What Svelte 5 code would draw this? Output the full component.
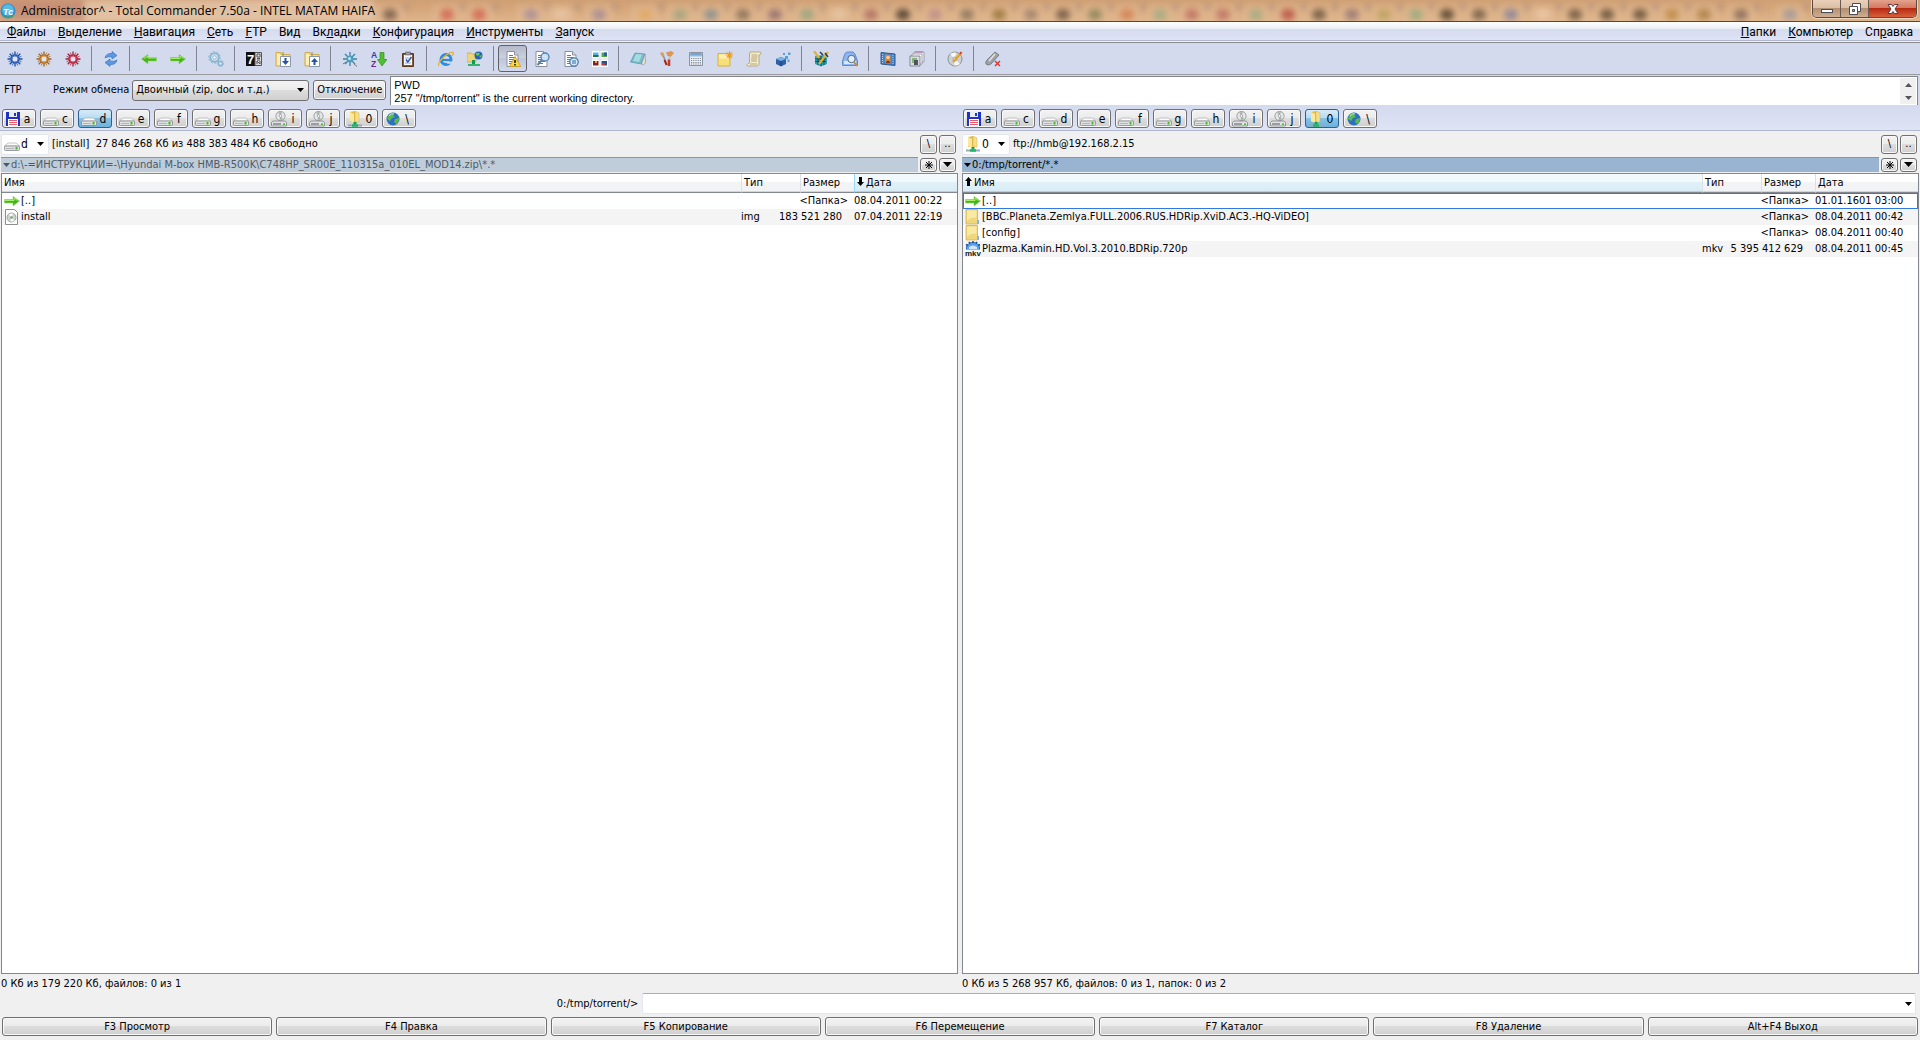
<script>
  const gear = (color, light) => `
    <path d="M8 .5v15M.5 8h15M2.700 2.700l10.600 10.600M13.300 2.700L2.700 13.300" stroke="${color}" stroke-width="1.300"/>
    <path d="M5.300 1.600l5.400 12.800M10.700 1.600L5.300 14.400M1.600 5.300l12.800 5.400M1.600 10.700l12.800-5.400" stroke="${color}" stroke-width=".8"/>
    <circle cx="8" cy="8" r="3.600" fill="#dfe5f6" stroke="${color}" stroke-width="1.800"/><circle cx="8" cy="8" r="3.200" fill="none" stroke="${light}" stroke-width="1"/>`;
  const page = `<path d="M2 .5h7.500l3.500 3.500v11.500H2z" fill="#fff" stroke="#8b8f99"/><path d="M9.500 .5v3.500H13" fill="#dde" stroke="#8b8f99"/><path d="M4 4.500h4M4 6.500h7M4 8.500h7M4 10.500h7M4 12.500h5" stroke="#4f7db8"/>`;
  const folder = `<path d="M1 1.500h5v2h9V15H1z" fill="#f2dc83" stroke="#cfae4c"/><path d="M2 3h3l2 2v9H2z" fill="#fbefb4"/>`;
  const globe = `<circle cx="8" cy="8" r="6.500" fill="#2d6fc4"/><path d="M4 3q3-2 5-1l-1 2 2 2-3 1-2 3-3-2zM10 8l4-1q0 4-3 6l-2-2z" fill="#5cba4a"/><path d="M4 5q2-3 5-2" stroke="#bfe0fa" fill="none"/>`;

  const icons = {
    gearBlue: gear('#1d4fa8', '#5584d6'),
    gearOrange: gear('#a8641d', '#e8a23c'),
    gearRed: gear('#a81d35', '#e84860'),
    refresh: `<path d="M2 7Q3 2 9 2.500L9 .5l5 4-5 3.500V6Q5 5 2 7zM14 9Q13 14 7 13.500V15.500L2 11.500 7 8v2Q11 11 14 9z" fill="#5b9ae2" stroke="#2e6bb8" stroke-width=".6"/>`,
    left: `<path d="M.5 8L7 3.500V6.500h8.500v3.500H7v3z" fill="#46b41f" stroke="#8fd36a" stroke-width=".6"/><path d="M3 7.500l4-2.500v2h8" stroke="#a5ee66" fill="none"/>`,
    right: `<path d="M15.500 8L9 3.500V6.500H.5v3.500H9v3z" fill="#46b41f" stroke="#8fd36a" stroke-width=".6"/><path d="M1 7.500h9V5l3.500 2.500" stroke="#a5ee66" fill="none"/>`,
    gears: `<circle cx="6.500" cy="6.500" r="4.200" fill="#dcecf5" stroke="#8ab4cf" stroke-width="2"/><circle cx="6.500" cy="6.500" r="5.800" fill="none" stroke="#8ab4cf" stroke-dasharray="1.800 1.800"/><circle cx="6.500" cy="6.500" r="1.800" fill="#f5fafd" stroke="#8ab4cf"/><circle cx="12.500" cy="12.500" r="2" fill="#dcecf5" stroke="#8ab4cf" stroke-width="1.500"/><circle cx="12.500" cy="12.500" r="3.200" fill="none" stroke="#8ab4cf" stroke-dasharray="1.200 1.200"/>`,
    seven: `<path d="M0 1h9v14H0z" fill="#111"/><path d="M9 1.500h6.500v13H9z" fill="#ddd" stroke="#555"/><text x="1" y="13" font-size="13" font-weight="700" font-family="Liberation Sans" fill="#fff">7</text><path d="M11 3h3v3h-3zM11 7.500h3M11 9h3M11 13v-3l3 3v-3" stroke="#555" fill="none"/>`,
    unpack: `${folder}<path d="M5.500 5.500h10v10h-10z" fill="#fff" stroke="#8d97ad"/><path d="M8 1v4" stroke="#9a8a50"/><path d="M9.500 7h2v3h2.500l-3.500 4L7 10h2.500z" fill="#2453a6"/>`,
    pack: `${folder}<path d="M5.500 5.500h10v10h-10z" fill="#fff" stroke="#8d97ad"/><path d="M8 1v4" stroke="#9a8a50"/><path d="M9.500 14h2v-3h2.500l-3.500-4L7 11h2.500z" fill="#2453a6"/>`,
    star: `<path d="M8 1v14M1 8h14M3 3l10 10M13 3L3 13" stroke="#3a83a6" stroke-width="1.300"/><circle cx="8" cy="8" r="3.500" fill="#4f9dbd"/><circle cx="7.500" cy="7.500" r="1.500" fill="#c3e4f0"/><path d="M12 13l3 2.500M1 13l3-2" stroke="#777"/>`,
    sort: `<text x="0" y="6.500" font-size="8.500" font-weight="700" font-family="Liberation Sans" fill="#2b42b0">A</text><text x="0" y="15.500" font-size="8.500" font-weight="700" font-family="Liberation Sans" fill="#6b2a8c">Z</text><path d="M9 1.500h4v7h3L11 15 6.500 8.500H9z" fill="#4fbf31" stroke="#2f8f1c" stroke-width=".7"/>`,
    clipboard: `<path d="M2.500 2.500h11v13h-11z" fill="#8a5a34" stroke="#5b3a20"/><path d="M4 4h8v10H4z" fill="#f7f9fd"/><path d="M5.500 1h5v3h-5z" fill="#99a" stroke="#556" stroke-width=".6"/><path d="M5 7h4M5 12h6" stroke="#8fa8cc"/><path d="M6 8.500l1.800 2.500L11.500 6" stroke="#2858b0" stroke-width="1.500" fill="none"/>`,
    ie: `<circle cx="8" cy="8.500" r="5" fill="none" stroke="#2a8be0" stroke-width="3"/><path d="M4 9h9" stroke="#2a8be0" stroke-width="2.200"/><path d="M9.500 10.500H16v2.300H9z" fill="#d4daee"/><path d="M1 15Q-1 12 6 6 13 0 15.500 1.500 16 3 13.500 5" stroke="#e8b030" stroke-width="1.300" fill="none"/>`,
    netGlobe: `<path d="M0 2h4l1 1h4v8H0z" fill="#f0d575" stroke="#c9a33f" stroke-width=".7"/><circle cx="11.500" cy="4.500" r="4" fill="#2a62b5"/><path d="M9 2q3-1 4 1l-2 2-2-1zM12 5l3-1-1 3z" fill="#67c653"/><path d="M6.500 9v4" stroke="#159a50" stroke-width="3"/><path d="M1 14h12" stroke="#31b570" stroke-width="2"/>`,
    pageWarn: `${page}<path d="M10 5.500L15.800 15.500H4.500z" fill="#fbd73b" stroke="#c79a15" stroke-width=".8"/><path d="M10 9v3M10 13v1.500" stroke="#111" stroke-width="1.500"/>`,
    pageFind: `${page}<circle cx="11" cy="6" r="4" fill="#cbe3f8" fill-opacity=".9" stroke="#5580b5" stroke-width="1.300"/><path d="M8 9l-4.500 5" stroke="#5c7fa8" stroke-width="2"/>`,
    pageMinus: `${page}<circle cx="11" cy="11" r="4.200" fill="#d6ebfa" stroke="#477fb5" stroke-width="1.300"/><path d="M9 10h4M9 12h4" stroke="#35699e"/>`,
    thumbs: `<path d="M0 0h7.500v7.500H0zM8.500 0H16v7.500H8.500zM0 8.500h7.500V16H0zM8.500 8.500H16V16H8.500z" fill="#fff"/><path d="M1 1.500h5.500v4.500H1z" fill="#58b5dd"/><path d="M1 4h5.500v2H1z" fill="#2b6e48"/><path d="M9.500 1.500H15V6H9.500z" fill="#56a83a"/><path d="M12 1.500h3V5h-3z" fill="#3058ba"/><path d="M1 10h5.500v4.500H1z" fill="#82202a"/><path d="M3 10h2v2H3z" fill="#e8a030"/><path d="M9.500 10H15v4.500H9.500z" fill="#27528f"/><path d="M10 12h3v2h-3z" fill="#b54035"/>`,
    notebook: `<path d="M5 2l10 1-3.500 10L.5 11z" fill="#76bccb" stroke="#4f93a8" stroke-width=".7"/><path d="M6 3l6 .6-3 7.400-6-1z" fill="#a5dbe2"/><path d="M15 3l.7 9-2.700 2-1.500-1z" fill="#e6e0cb" stroke="#88a" stroke-width=".6"/>`,
    brushes: `<path d="M4 4l4 10" stroke="#7d8ba6" stroke-width="1.500"/><path d="M11 5l-1 4" stroke="#c9c2bd" stroke-width="2"/><path d="M10 8.500v6.500" stroke="#c23a28" stroke-width="2.600"/><path d="M1 2l3-1 1.500 4-2 1z" fill="#d79a5c"/><path d="M7 1.500L12 0l3 2-3 3.500-3.500-.5z" fill="#dc9450"/><path d="M5.500 9L7.500 14" stroke="#a62218" stroke-width="2"/>`,
    calc: `<path d="M1.500 1.500h13v13h-13z" fill="#eceff3" stroke="#8b939f"/><path d="M2 2h12v3.500H2z" fill="#8fb9de"/><path d="M3 3h10" stroke="#5d92c6"/><path d="M3 7.500h10M3 9.500h10M3 11.500h10M3 13h10" stroke="#7e8793" stroke-dasharray="1.200 1"/>`,
    note: `<path d="M1 2.500h12v12.500H1z" fill="#f7df79" stroke="#d9b03f"/><path d="M2 3.500h9v4H2z" fill="#fcf1b4"/><path d="M12.500 0v8M8.500 4h8M9.800 1.300l5.400 5.400M15.200 1.300L9.800 6.700" stroke="#ef9d2a" stroke-width="1.200"/>`,
    scroll: `<path d="M4 1h10.500q1 1 0 2.500L13 4v9.500L11 15H1.500Q0 13.500 2 12.500L3.500 12V3z" fill="#f6ecca" stroke="#a89a72" stroke-width=".8"/><path d="M5.500 4h6M5.500 6h6M5 8h6M5 10h6M4 13h7" stroke="#b3a57b"/>`,
    cubes: `<path d="M1 8l5-2 5 2v5l-5 2.500L1 13z" fill="#2c62a5"/><path d="M1 8l5 2 5-2-5-2z" fill="#7cb3e3"/><path d="M10 5h3v3h-3zM13 1.500h2.500V4H13zM8 2h2v2H8zM12.500 8.500h2V11h-2z" fill="#5c9ed9"/><path d="M6 10v5" stroke="#183f78"/>`,
    grid: `<path d="M2 5l9-1 3 3v6l-6 2.500L2 13z" fill="#27a5b5"/><path d="M2 8h11M2 10.500h11M5 5v9M8 5v10M11 5v9" stroke="#13323e" stroke-width=".8"/><path d="M1 0l5 7M15 1L6 13" stroke="#e8af2c" stroke-width="2.200"/><path d="M7 1l3 3M12 2l3 4" stroke="#213f58" stroke-width="1.500"/>`,
    printFind: `<path d="M3 2.500L5 1h6l2 2 2.500 7v4.500H.5V10z" fill="#8fb5ee" stroke="#4f79c4" stroke-width=".8"/><path d="M2 10h12v3H2z" fill="#dbe7fb"/><circle cx="9.500" cy="8" r="3.700" fill="#dff0fc" stroke="#50647f"/><path d="M12 11l3 4" stroke="#c18a3e" stroke-width="2"/>`,
    film: `<path d="M1 1.500l14 1.500v11.500L1 13z" fill="#4585ce" stroke="#315783"/><path d="M5 3.500l5.500 .5v8.500L5 12z" fill="#e2832b"/><circle cx="8" cy="6.500" r="1.800" fill="#f9ce8b"/><path d="M5.500 12q2.500-5 5 0z" fill="#713c1b"/><path d="M2.500 3v9M13 4v9" stroke="#a5cdf5" stroke-dasharray="1 1"/>`,
    copies: `<path d="M5 1h10v10H5z" fill="#eef0f4" stroke="#8f939b" stroke-width=".8"/><path d="M3 3h10v10H3z" fill="#fff" stroke="#8f939b" stroke-width=".8"/><path d="M1 5h10v10H1z" fill="#d9dde4" stroke="#6e737d" stroke-width=".8"/><path d="M3 7h5v5H3z" fill="#8bb27b"/><path d="M5 9h4v5H5z" fill="#4e555e"/><path d="M6 1h8" stroke="#b068b0"/>`,
    disc: `<circle cx="8" cy="8" r="7" fill="#cdd1d2" stroke="#8c9194"/><path d="M8 8L3 3Q6 1 9 1.500z" fill="#f7f8f8"/><path d="M8 8l5 5q-3 2-6 1.500z" fill="#f3f5f2"/><circle cx="8" cy="8" r="2" fill="#fff" stroke="#999"/><path d="M14 2L6 11" stroke="#e9a124" stroke-width="2.200"/><path d="M14.500 1l-1.500 2" stroke="#cf3e2b" stroke-width="2"/>`,
    usb: `<path d="M10 1l4 3-8 9q-3 2-5 0-1-2 1-4z" fill="#9ea1a6" stroke="#6d7075" stroke-width=".8"/><path d="M10 3L4 10" stroke="#e2e4e6" stroke-width="1.500"/><path d="M10 10l5 5M15 10l-5 5" stroke="#d53535" stroke-width="1.400"/>`,
    floppy: `<path d="M1 1h14v14H1z" fill="#1c35c4"/><path d="M4 1h8v5H4z" fill="#e9ecf5"/><path d="M9 2h2v3H9z" fill="#1c35c4"/><path d="M3 8h10v7H3z" fill="#fff"/><path d="M4 9.500h8M4 11.500h8M4 13.500h8" stroke="#ec5a68"/>`,
    hdd: `<path d="M4 7h8.500L15.500 10H.5z" fill="#fbfbfb" stroke="#a9adb0" stroke-width=".7"/><path d="M1.500 10h13q1 0 1 1v2.500q0 1-1 1h-13q-1 0-1-1V11q0-1 1-1z" fill="#dfe1e2" stroke="#85898c" stroke-width=".8"/><path d="M2 12.500h8" stroke="#b3b6b8"/><path d="M11.500 11h2v2.500h-2z" fill="#46b622"/>`,
    cd: `<circle cx="9.500" cy="5" r="4.600" fill="#e6e8e9" stroke="#8a8d90" stroke-width=".8"/><path d="M9.500 5L7 1.500 11 1zM9.500 5l3 3.500-4 .5z" fill="#a9b0a8"/><circle cx="9.500" cy="5" r="1.300" fill="#fff" stroke="#888" stroke-width=".6"/><path d="M2 10h12l1.500 1.500v3.500H.5v-3.500z" fill="#e0e2e3" stroke="#7f8386" stroke-width=".8"/><path d="M2 13h8" stroke="#6b6f72" stroke-width="1.200"/><path d="M12 12.500h2V14h-2z" fill="#46b622"/>`,
    ftp: `<path d="M3 1l5-1v11H3z" fill="#e3bd4f"/><path d="M8 0l4 2v9H8z" fill="#f6df8a" stroke="#d4ae48" stroke-width=".5"/><path d="M3 1l4 2v9l-4-2z" fill="#f9e89d"/><path d="M8 11v3" stroke="#12a357" stroke-width="3"/><path d="M1 14.500h14" stroke="#9aa8b3" stroke-width="2"/><path d="M5 14.500h6" stroke="#1fb767" stroke-width="2.500"/>`,
    globe,
    folder: `<path d="M1 .5h11.500V15H1z" fill="#f0d77c" stroke="#d0b051" stroke-width=".8"/><path d="M2 1.500h9.500v7q-6 0-9.500 3z" fill="#f8e9a4"/><path d="M12.500 11v4h1.500v-4z" fill="#86aed0"/>`,
    image: `<path d="M1.500 .5h9l3 3v12h-12z" fill="#fff" stroke="#8e8e8e"/><circle cx="7.500" cy="8.500" r="4.500" fill="#cfd2d0" stroke="#8d918e" stroke-width=".8"/><path d="M7.500 8.500L5 5l4-.6zM7.500 8.500l3 3.600-4 .6z" fill="#fff"/><circle cx="7.500" cy="8.500" r="1.300" fill="#6eb04c"/>`,
    mkv: `<path d="M1.500 9V6Q3 1.500 8 1.500T14.500 6v3z" fill="#5ba2ea" stroke="#1c4f9d" stroke-width=".8"/><path d="M1 3.500l2 1M4 .8l1 1.700M8 0v2M12 .8l-1 1.700M15 3.500l-2 1" stroke="#1c4f9d" stroke-width="1.500"/><path d="M4 6q4-3 8 0v2H4z" fill="#cfe5fb"/><path d="M0 8.500h16V15H0z" fill="#fff" fill-opacity=".85"/><text x="0" y="14.500" font-size="8" font-weight="700" font-family="Liberation Sans" fill="#111">mkv</text>`,
    logo: `<circle cx="8" cy="8" r="7.500" fill="#2c91cb"/><circle cx="8" cy="7" r="5.800" fill="#58b9e4"/><path d="M2 12Q8 16 14 11l-2 4H5z" fill="#3aa66b"/><text x="3" y="11.500" font-size="9" font-style="italic" font-weight="700" font-family="Liberation Sans" fill="#fff">Tc</text>`
  };

  // every group is closed by a separator line
  const toolbar = [
    [['gearBlue', 'Настройки'], ['gearOrange', 'Панель'], ['gearRed', 'Параметры']],
    [['refresh', 'Обновить']],
    [['left', 'Назад'], ['right', 'Вперёд']],
    [['gears', 'Службы']],
    [['seven', '7-Zip'], ['unpack', 'Распаковать'], ['pack', 'Упаковать']],
    [['star', 'Выделить'], ['sort', 'Сортировка'], ['clipboard', 'Буфер']],
    [['ie', 'Браузер'], ['netGlobe', 'Сеть']],
    [['pageWarn', 'Скрытые файлы', true], ['pageFind', 'Просмотр'], ['pageMinus', 'Сравнить'], ['thumbs', 'Эскизы']],
    [['notebook', 'Блокнот'], ['brushes', 'Paint'], ['calc', 'Калькулятор'], ['note', 'Заметки'], ['scroll', 'Скрипт'], ['cubes', 'Реестр']],
    [['grid', 'Диск'], ['printFind', 'Поиск']],
    [['film', 'Видео'], ['copies', 'Архив']],
    [['disc', 'Запись']],
    [['usb', 'Извлечь']]
  ];

  // [before, hotkey letter, after]
  const menuLeft = [
    ['', 'Ф', 'айлы'], ['', 'В', 'ыделение'], ['', 'Н', 'авигация'], ['', 'С', 'еть'], ['', 'F', 'TP'],
    ['Ви', 'д', ''], ['Вк', 'л', 'адки'], ['', 'К', 'онфигурация'], ['', 'И', 'нструменты'], ['', 'З', 'апуск']
  ];
  const menuRight = [['', 'П', 'апки'], ['', 'К', 'омпьютер'], ['Сп', 'р', 'авка']];

  const drives = [
    ['a', 'floppy'], ['c', 'hdd'], ['d', 'hdd'], ['e', 'hdd'], ['f', 'hdd'], ['g', 'hdd'], ['h', 'hdd'],
    ['i', 'cd'], ['j', 'cd'], ['0', 'ftp'], ['\\', 'globe']
  ];

  let panels = $state([
    {
      drive: 'd', icon: 'hdd', active: false, sort: 'date',
      info: '[install]  27 846 268 Кб из 488 383 484 Кб свободно',
      path: 'd:\\-=ИНСТРУКЦИИ=-\\Hyundai M-box HMB-R500K\\C748HP_SR00E_110315a_010EL_MOD14.zip\\*.*',
      status: '0 Кб из 179 220 Кб, файлов: 0 из 1',
      files: [
        { icon: 'right', name: '[..]', ext: '', size: '<Папка>', date: '08.04.2011 00:22' },
        { icon: 'image', name: 'install', ext: 'img', size: '183 521 280', date: '07.04.2011 22:19' }
      ]
    },
    {
      drive: '0', icon: 'ftp', active: true, sort: 'name',
      info: 'ftp://hmb@192.168.2.15',
      path: '0:/tmp/torrent/*.*',
      status: '0 Кб из 5 268 957 Кб, файлов: 0 из 1, папок: 0 из 2',
      files: [
        { icon: 'right', name: '[..]', ext: '', size: '<Папка>', date: '01.01.1601 03:00' },
        { icon: 'folder', name: '[BBC.Planeta.Zemlya.FULL.2006.RUS.HDRip.XviD.AC3.-HQ-ViDEO]', ext: '', size: '<Папка>', date: '08.04.2011 00:42' },
        { icon: 'folder', name: '[config]', ext: '', size: '<Папка>', date: '08.04.2011 00:40' },
        { icon: 'mkv', name: 'Plazma.Kamin.HD.Vol.3.2010.BDRip.720p', ext: 'mkv', size: '5 395 412 629', date: '08.04.2011 00:45' }
      ]
    }
  ]);

  const keys = ['F3 Просмотр', 'F4 Правка', 'F5 Копирование', 'F6 Перемещение', 'F7 Каталог', 'F8 Удаление', 'Alt+F4 Выход'];

  let command = $state('');
  const log = 'PWD\n257 "/tmp/torrent" is the current working directory.';

  // desktop icons showing through the glass title bar
  const glass = [
    [390, '#6b5040'], [447, '#cf5a48'], [479, '#cf5a48'], [531, '#a0889a'], [561, '#e8c6a8'], [599, '#9c8494'],
    [645, '#e0a860'], [680, '#9aa078'], [711, '#7c8890'], [743, '#7d6450'], [775, '#8a6468'], [807, '#8ea07c'],
    [839, '#e6c6a6'], [871, '#a8645c'], [903, '#35281c'], [935, '#b88888'], [967, '#7d6c54'], [999, '#8f6c30'],
    [1031, '#987868'], [1063, '#604a3a'], [1095, '#7d7c50'], [1127, '#d0784c'], [1160, '#9aa880'], [1192, '#b8685c'],
    [1223, '#b8685c'], [1256, '#9aa880'], [1288, '#b04038'], [1319, '#5f4936'], [1352, '#8d6c70'], [1384, '#b8a058'],
    [1416, '#8fa87c'], [1447, '#40301f'], [1479, '#65503c'], [1511, '#7d7c9c'], [1543, '#ecc8a8'], [1575, '#604a36'],
    [1607, '#54422e'], [1640, '#54422e'], [1672, '#b8843c'], [1704, '#a4783c'], [1741, '#7c6050'], [1790, '#98949c']
  ];
</script>

{#snippet icon(name)}
  <svg class="icon" viewBox="0 0 16 16" fill="none" aria-hidden="true">{@html icons[name]}</svg>
{/snippet}

{#snippet caret()}
  <svg class="caret" viewBox="0 0 7 4" aria-hidden="true"><path d="M0 0h7L3.500 4z" /></svg>
{/snippet}

{#snippet menu(items)}
  {#each items as [before, key, after]}
    <button class="menu-item">{before}<u>{key}</u>{after}</button>
  {/each}
{/snippet}

{#snippet sortArrow(up)}
  <svg class="sort-arrow" viewBox="0 0 7 9" aria-hidden="true"><path d={up ? 'M3.500 0L7 4H5v5H2V4H0z' : 'M3.500 9L7 5H5V0H2v5H0z'} /></svg>
{/snippet}

<div class="app">
  <header class="title-bar">
    <svg class="glass" aria-hidden="true">
      <rect x="0" y="0" width="84" height="24" fill="#c08878" opacity=".7" />
      <rect x="84" y="0" width="290" height="24" fill="#e6cbb2" opacity=".7" />
      {#each glass as [x, color]}
        <rect x={x - 14} y="5" width="28" height="20" rx="4" fill="#e6c09a" opacity=".5" />
        <rect x={x - 7} y="9" width="14" height="11" rx="5" fill={color} opacity=".75" />
        <circle cx={x + 16} cy="7" r="3" fill="#8a7c80" opacity=".5" />
      {/each}
    </svg>
    {@render icon('logo')}
    <h1>Administrator^ - Total Commander 7.50a - INTEL MATAM HAIFA</h1>
    <div class="window-buttons">
      <button class="minimize" aria-label="Свернуть">
        <svg width="14" height="12" viewBox="0 0 14 12"><rect x="1.500" y="6.500" width="11" height="3" fill="#fff" stroke="#4c4a52" /></svg>
      </button>
      <button class="restore" aria-label="Восстановить">
        <svg width="14" height="12" viewBox="0 0 14 12"><path d="M4.500 .5h8v8h-8z" fill="#fff" stroke="#4c4a52" /><path d="M1.500 3.500h8v8h-8z" fill="#fff" stroke="#4c4a52" /><path d="M4.500 6.500h2v2h-2z" fill="#aaa" stroke="#4c4a52" /></svg>
      </button>
      <button class="close" aria-label="Закрыть">
        <svg width="14" height="12" viewBox="0 0 14 12"><path d="M2 1.500h3.500L7 3.500 8.500 1.500H12L9 6l3 4.500H8.500L7 8.500l-1.500 2H2L5 6z" fill="#fff" stroke="#5b3a42" /></svg>
      </button>
    </div>
  </header>

  <nav class="menu-bar">
    {@render menu(menuLeft)}
    <span class="spacer"></span>
    {@render menu(menuRight)}
  </nav>

  <div class="toolbar">
    {#each toolbar as group, g}
      {#if g > 0}<span class="separator"></span>{/if}
      {#each group as [name, title, pressed]}
        <button class="tool" class:pressed aria-label={title}>{@render icon(name)}</button>
      {/each}
    {/each}
  </div>

  <div class="ftp-bar">
    <span class="ftp-title">FTP</span>
    <label for="mode">Режим обмена</label>
    <div class="mode">
      <select id="mode"><option>Двоичный (zip, doc и т.д.)</option></select>
      {@render caret()}
    </div>
    <button class="btn disconnect">Отключение</button>
    <div class="log">
      <textarea readonly aria-label="Журнал FTP" value={log}></textarea>
      <div class="scroll">
        <svg viewBox="0 0 7 4" aria-hidden="true"><path d="M0 4h7L3.500 0z" /></svg>
        <svg viewBox="0 0 7 4" aria-hidden="true"><path d="M0 0h7L3.500 4z" /></svg>
      </div>
    </div>
  </div>

  <div class="drives">
    {#each panels as panel}
      <div class="drive-group">
        {#each drives as [letter, name]}
          <button class="btn drive" class:selected={panel.drive === letter} onclick={() => (panel.drive = letter)}>
            {@render icon(name)}<span>{letter}</span>
          </button>
        {/each}
      </div>
    {/each}
  </div>

  <main class="panels">
    {#each panels as panel}
      <section class="panel" class:active={panel.active}>
        <div class="info">
          <div class="drive-select">
            {@render icon(panel.icon)}
            <select aria-label="Диск" value={panel.drive}>
              {#each drives as [letter]}
                <option value={letter}>{letter}</option>
              {/each}
            </select>
            {@render caret()}
          </div>
          <span class="free">{panel.info}</span>
          <button class="btn small" aria-label="Корень">\</button>
          <button class="btn small" aria-label="Вверх">..</button>
        </div>
        <div class="path-row">
          <div class="path">{@render caret()}<span>{panel.path}</span></div>
          <button class="btn small" aria-label="Избранное">
            <svg width="8" height="8" viewBox="0 0 8 8"><path d="M4 0v8M0 4h8M1 1l6 6M7 1L1 7" stroke="#000" /></svg>
          </button>
          <button class="btn small" aria-label="История">
            <svg width="9" height="5" viewBox="0 0 9 5"><path d="M0 0h9L4.500 5z" /></svg>
          </button>
        </div>
        <div class="list">
          <table>
            <colgroup><col /><col class="col-ext" /><col class="col-size" /><col class="col-date" /></colgroup>
            <thead>
              <tr>
                <th class:sorted={panel.sort === 'name'}>{#if panel.sort === 'name'}{@render sortArrow(true)}{/if}Имя</th>
                <th>Тип</th>
                <th>Размер</th>
                <th class:sorted={panel.sort === 'date'}>{#if panel.sort === 'date'}{@render sortArrow(false)}{/if}Дата</th>
              </tr>
            </thead>
            <tbody>
              {#each panel.files as file, i}
                <tr class:cursor={panel.active && i === 0}>
                  <td><div class="file">{@render icon(file.icon)}<span>{file.name}</span></div></td>
                  <td>{file.ext}</td>
                  <td><div class="size" class:dir={file.size === '<Папка>'}>{file.size}</div></td>
                  <td>{file.date}</td>
                </tr>
              {/each}
            </tbody>
          </table>
        </div>
        <div class="status">{panel.status}</div>
      </section>
    {/each}
  </main>

  <div class="command">
    <label for="cmd">0:/tmp/torrent/&gt;</label>
    <div class="command-box">
      <input id="cmd" type="text" bind:value={command} />
      {@render caret()}
    </div>
  </div>

  <footer class="keys">
    {#each keys as key}
      <button class="btn">{key}</button>
    {/each}
  </footer>
</div>

<style>
  :global(body) {
    background: #f0f0f0;
  }
  .app {
    display: flex;
    flex-direction: column;
    min-height: 100vh;
    font-family: "DejaVu Sans Condensed", "DejaVu Sans", sans-serif;
    font-size: 11px;
    line-height: 14px;
    color: #000;
    background: #f0f0f0;
  }
  button, select, input, textarea {
    box-sizing: border-box;
    margin: 0;
    padding: 0;
    border: none;
    border-radius: 0;
    background: none;
    font: inherit;
    color: inherit;
    outline: none;
    appearance: none;
  }
  .icon {
    width: 16px;
    height: 16px;
    flex: none;
  }
  .caret {
    width: 7px;
    height: 4px;
    flex: none;
  }
  .spacer {
    flex: 1;
  }

  /* title */
  .title-bar {
    position: relative;
    display: flex;
    align-items: center;
    height: 22px;
    box-sizing: border-box;
    border-bottom: 1px solid #5b4638;
    background: linear-gradient(#d0a075, #d6a67a 40%, #deb48a);
    overflow: hidden;
  }
  .glass {
    position: absolute;
    inset: 0;
    width: 100%;
    height: 100%;
    filter: blur(3px);
  }
  .title-bar .icon, h1 {
    position: relative;
  }
  h1 {
    flex: 1;
    margin: 0;
    padding-left: 5px;
    font: 12px/20px "Open Sans", "Noto Sans", sans-serif;
  }
  .window-buttons {
    position: relative;
    align-self: flex-start;
    display: flex;
    height: 18px;
    margin-right: 3px;
    box-sizing: border-box;
    border: 1px solid #5a4a40;
    border-top: none;
    border-radius: 0 0 5px 5px;
    overflow: hidden;
    box-shadow: 0 0 0 1px #ecd3bc;
  }
  .window-buttons button {
    display: flex;
    align-items: center;
    justify-content: center;
    width: 28px;
    border-right: 1px solid #6b5a50;
    background: linear-gradient(#ead0bb, #dcbfa6 45%, #b38f73 50%, #cfae92);
  }
  .window-buttons .close {
    width: 47px;
    border-right: none;
    background: linear-gradient(#e4a28c, #d37a62 45%, #b92a12 50%, #d8603c);
  }

  /* menu */
  .menu-bar {
    display: flex;
    align-items: center;
    gap: 12px;
    height: 18px;
    padding: 0 7px;
    border-bottom: 1px solid #b2b8cb;
    background: linear-gradient(#fff, #e9eef6 7px, #d5dcee 7px, #dee3f5);
    font: 12px/18px Roboto, "Open Sans", sans-serif;
  }
  .menu-item {
    padding-top: 2px;
  }

  /* toolbar */
  .toolbar {
    display: flex;
    align-items: center;
    height: 31px;
    margin-top: 1px;
    border-top: 1px solid #8c8c90;
    border-bottom: 1px solid #9a9a9e;
    background: #d4daee;
  }
  .tool {
    display: flex;
    align-items: center;
    justify-content: center;
    width: 29px;
    height: 27px;
  }
  .tool.pressed {
    border: 1px solid #5f6268;
    border-radius: 3px;
    background: linear-gradient(#b5bac8, #ccd2e3 50%, #bfc5d8 50%, #d4daee);
  }
  .separator {
    width: 1px;
    height: 25px;
    margin: 0 4px;
    background: #7f848f;
  }

  .btn {
    display: flex;
    align-items: center;
    justify-content: center;
    border: 1px solid #707070;
    border-radius: 3px;
    background: linear-gradient(#f2f2f2, #ebebeb 50%, #dddddd 50%, #cfcfcf);
    box-shadow: inset 0 0 0 1px #f8f8f8;
  }

  /* ftp */
  .ftp-bar {
    display: flex;
    align-items: center;
    height: 30px;
    padding: 0 2px 0 4px;
    background: #d4daee;
  }
  .ftp-title {
    width: 49px;
  }
  .mode {
    display: flex;
    align-items: center;
    box-sizing: border-box;
    width: 177px;
    height: 21px;
    margin: 0 4px 0 3px;
    padding-right: 4px;
    border: 1px solid #707070;
    border-radius: 3px;
    background: linear-gradient(#f2f2f2, #ebebeb 50%, #dddddd 50%, #cfcfcf);
  }
  .mode select {
    flex: 1;
    min-width: 0;
    padding-left: 3px;
  }
  .disconnect {
    width: 73px;
    height: 20px;
  }
  .log {
    display: flex;
    flex: 1;
    height: 29px;
    align-self: flex-end;
    margin-left: 4px;
    border-top: 1px solid #7f848f;
    border-left: 1px solid #7f848f;
    border-right: 1px solid #7f848f;
    box-sizing: border-box;
    background: #fff;
  }
  .log textarea {
    flex: 1;
    padding: 2px 3px 0;
    resize: none;
    overflow: hidden;
    font: 11px/13px "Liberation Sans", sans-serif;
  }
  .scroll {
    display: flex;
    flex-direction: column;
    justify-content: space-around;
    align-items: center;
    width: 16px;
    margin: 1px;
    background: #f0f0f0;
  }
  .scroll svg {
    width: 7px;
    height: 4px;
    fill: #555;
  }

  /* drives */
  .drives, .panels {
    display: grid;
    grid-template-columns: 1fr 1fr;
    gap: 4px;
    padding: 0 1px;
  }
  .drives {
    height: 25px;
    border-bottom: 1px solid #b2b8cb;
    background: linear-gradient(#d4daee, #dee3f5);
  }
  .drive-group {
    display: flex;
    align-items: center;
    gap: 4px;
    padding: 2px 0 0 1px;
  }
  .drive {
    width: 34px;
    height: 19px;
    padding: 0 2px;
    justify-content: flex-start;
    font-size: 12px;
  }
  .drive span {
    flex: 1;
    text-align: center;
  }
  .drive.selected {
    border-color: #2c628b;
    background: linear-gradient(#d6ebf7, #b5dbf1 50%, #85c1e5 50%, #6db2dd);
    box-shadow: none;
  }

  /* panels */
  .panels {
    flex: 1;
  }
  .panel {
    display: flex;
    flex-direction: column;
    min-width: 0;
  }
  .info, .path-row {
    display: flex;
    align-items: center;
    gap: 2px;
    padding-right: 2px;
  }
  .info {
    height: 26px;
  }
  .small {
    width: 17px;
    height: 19px;
  }
  .drive-select {
    display: flex;
    align-items: center;
    box-sizing: border-box;
    width: 48px;
    height: 21px;
    padding: 0 4px 0 2px;
    border: 1px solid #e2e6ee;
    border-radius: 2px;
    background: #fff;
  }
  .drive-select select {
    flex: 1;
    min-width: 0;
    padding-left: 1px;
    font-size: 12px;
  }
  .free {
    flex: 1;
    white-space: pre;
    padding-left: 1px;
  }
  .path-row {
    height: 15px;
  }
  .path-row .small {
    height: 14px;
  }
  .path {
    display: flex;
    align-items: center;
    flex: 1;
    gap: 1px;
    height: 15px;
    box-sizing: border-box;
    padding-left: 2px;
    border-top: 1px solid #8b95a0;
    background: #bfcddb;
    color: #4d5a66;
  }
  .active .path {
    background: #99b4d1;
    color: #000;
  }
  .path .caret {
    fill: currentColor;
  }
  .list {
    flex: 1;
    margin-top: 1px;
    border: 1px solid #828790;
    background: #fff;
  }
  table {
    width: 100%;
    table-layout: fixed;
    border-collapse: separate;
    border-spacing: 0;
  }
  .col-ext {
    width: 59px;
  }
  .col-size {
    width: 54px;
  }
  .col-date {
    width: 103px;
  }
  th {
    height: 19px;
    box-sizing: border-box;
    padding: 0 0 0 2px;
    border-left: 1px solid #dcdfe3;
    border-bottom: 1px solid #828790;
    background: linear-gradient(#fff 45%, #f3f4f5 45%, #f1f2f4);
    box-shadow: inset 0 -1px #d5d5d5;
    text-align: left;
    font-weight: normal;
  }
  th:first-child {
    border-left: none;
  }
  th.sorted {
    border-left-color: #96d9f9;
    background: linear-gradient(#f2f9fc 45%, #e1f1f9 45%, #d8ecf6);
    box-shadow: inset 0 -1px #96d9f9;
  }
  .sort-arrow {
    width: 7px;
    height: 9px;
    margin-right: 2px;
  }
  td {
    height: 16px;
    padding: 0;
    white-space: nowrap;
  }
  .file {
    display: flex;
    align-items: center;
    gap: 1px;
    padding-left: 2px;
  }
  .size {
    display: flex;
    justify-content: flex-end;
    padding-right: 12px;
  }
  .size.dir {
    padding-right: 6px;
  }
  tbody tr:nth-child(even) td {
    background: #f4f4f4;
  }
  .cursor {
    outline: 1px solid #3178e0;
    outline-offset: -1px;
  }
  .status {
    height: 19px;
    line-height: 20px;
  }

  /* command line */
  .command {
    display: flex;
    align-items: center;
    gap: 4px;
    height: 21px;
    padding: 0 4px 0 29%;
  }
  .command-box {
    display: flex;
    align-items: center;
    flex: 1;
    box-sizing: border-box;
    height: 21px;
    padding-right: 3px;
    border: 1px solid #e2e6ee;
    border-top-color: #abadb3;
    border-radius: 2px;
    background: #fff;
  }
  .command-box input {
    flex: 1;
  }
  .keys {
    display: grid;
    grid-template-columns: repeat(7, 1fr);
    gap: 4px;
    padding: 3px 2px 4px;
  }
  .keys .btn {
    height: 19px;
  }
</style>
